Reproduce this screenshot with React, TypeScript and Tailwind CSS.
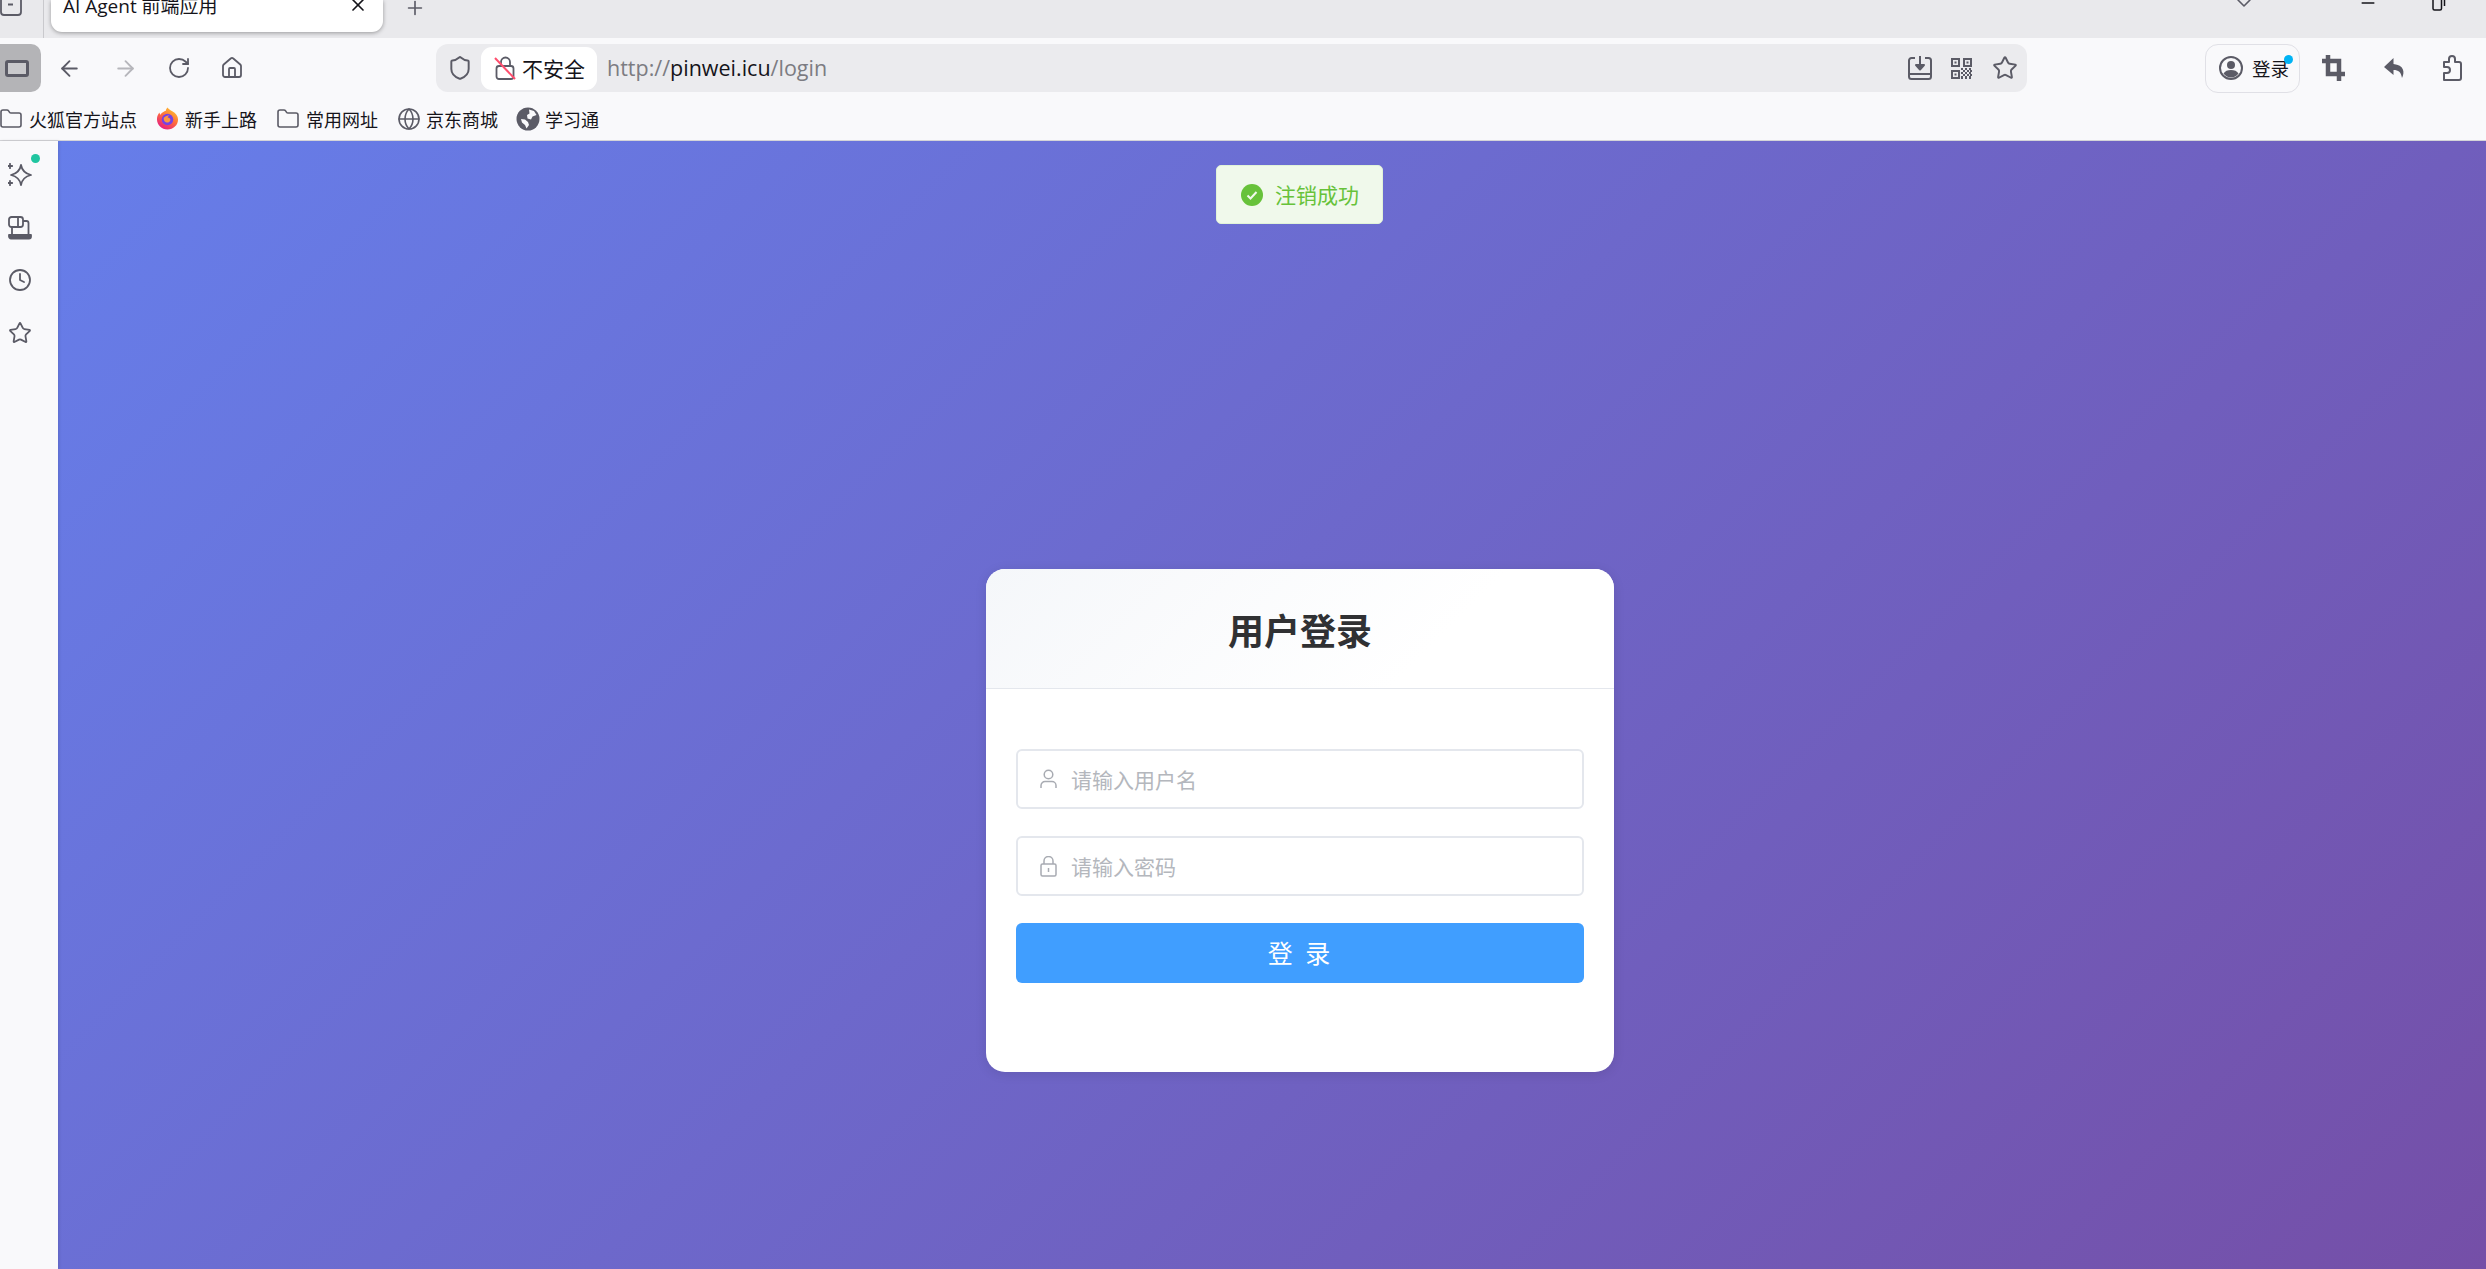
import { ArrowLeft, ArrowRight, RotateCw, House, Shield, Star, Clock, Folder, Globe, X, Plus, ChevronDown, Minus } from "lucide-react";

const cjk = "font-['Noto_Sans_CJK_SC','Liberation_Sans',sans-serif]";
const ui = "font-['Open_Sans','Noto_Sans_CJK_SC',sans-serif]";

const FirefoxLogo = () => (
  <svg width="23" height="24" viewBox="0 0 24 24">
    <defs>
      <linearGradient id="ff" x1="0.8" y1="0" x2="0.2" y2="1">
        <stop offset="0" stopColor="#ffcb2e" />
        <stop offset="0.45" stopColor="#ff7139" />
        <stop offset="1" stopColor="#e31587" />
      </linearGradient>
    </defs>
    <path d="M12 23C5.9 23 1 18.3 1 12.3 1 9 2.4 6.6 3.6 5.3c.1 1 .6 1.900 1.200 2.300C5.500 5.200 8.600 3.800 10.500 3c-.2-.9.400-2.100 1.800-3 .3 1.500 2 2.300 4.700 3.800 3.500 1.900 6 4.700 6 8.700C23 18.300 18.100 23 12 23z" fill="url(#ff)" />
    <circle cx="12" cy="12.500" r="6" fill="#7542e5" />
    <path d="M8 11c1.500-2 4-3 6-2.500-1.200.3-1.800 1-1.800 1.800 0 .6 2.800.5 2.800 2.400 0 2-2 3.300-4 3-1.600-.2-3-1.700-3-4.700z" fill="#ff9640" />
  </svg>
);

const FilledGlobe = () => (
  <svg width="24" height="24" viewBox="0 0 24 24">
    <circle cx="12" cy="12" r="11.500" fill="#5b5b66" />
    <path d="M13 2.500l5 1.500 2.500 4-4 1.500-1.500 3-3.500-1-.5-3.500 2.500-1.500zM5 12l4 .5 3 2.500 1 3-2.500 3.500-1.500-3.500-3-2.500z" fill="#f9f9fb" />
  </svg>
);

const Bookmark = ({ icon, label, width }: { icon: React.ReactNode; label: string; width: string }) => (
  <div className={`flex items-center ${width}`}>
    <span className="flex w-[29px] shrink-0 items-center">{icon}</span>
    <span className="whitespace-nowrap text-[18px] leading-none text-[#15141a]">{label}</span>
  </div>
);

const Sidebar = () => (
  <aside className="relative z-10 flex w-[58px] shrink-0 flex-col items-start bg-[#f9f9fb] pl-[8px] pt-[22px] shadow-[1px_0_3px_rgba(0,0,0,0.12)]">
    <div className="relative h-[24px] w-[24px]">
      <svg width="24" height="24" viewBox="0 0 24 24" fill="none" stroke="#5b5b66" strokeWidth="1.800" strokeLinejoin="round" strokeLinecap="round">
        <path d="M13 2c1 6 4 8.500 10 10-6 1.500-9 4-10 10-1-6-4-8.500-10-10 6-1.500 9-4 10-10z" />
        <path d="M2 .8v4.400M-.2 3h4.400M2 17.800v4.400M-.2 20h4.400" />
      </svg>
      <span className="absolute left-[23px] top-[-9px] h-[9px] w-[9px] rounded-full bg-[#20c5a0]" />
    </div>
    <svg className="mt-[29px]" width="24" height="24" viewBox="0 0 24 24" fill="none" stroke="#5b5b66" strokeWidth="1.800" strokeLinejoin="round">
      <rect x="1" y="1" width="14" height="10" rx="2.500" />
      <path d="M10 1v10" />
      <path d="M4 11v7M15 5h3.500a2 2 0 0 1 2 2v11" />
      <path d="M1 19h22v1.500a2 2 0 0 1-2 2H3a2 2 0 0 1-2-2z" fill="#5b5b66" />
    </svg>
    <Clock className="mt-[28px]" size={24} color="#5b5b66" strokeWidth={1.800} />
    <Star className="mt-[29px]" size={24} color="#5b5b66" strokeWidth={1.800} />
  </aside>
);

const TabStrip = () => (
  <div className="relative flex h-[38px] items-start overflow-hidden bg-[#e9e9ec]">
    <div className="flex h-[38px] w-[44px] shrink-0 items-start justify-center border-r border-[#c9c9cd]">
      <svg className="ml-[-21px]" width="24" height="16" viewBox="0 0 24 16" fill="none" stroke="#5b5b66" strokeWidth="1.800">
        <path d="M2 -4v16a3 3 0 0 0 3 3h14a3 3 0 0 0 3-3V-4" />
        <path d="M9 4.500h5" strokeWidth="2" />
      </svg>
    </div>
    <div className={`ml-[7px] flex h-[32px] w-[332px] shrink-0 items-start justify-between rounded-b-[11px] bg-white pl-[12px] pr-[15px] shadow-[0_1px_4px_rgba(0,0,0,0.35)] ${ui}`}>
      <span className="whitespace-nowrap text-[19px] leading-[12px] text-[#15141a]">AI Agent 前端应用</span>
      <X className="mt-[-5px]" size={20} color="#15141a" strokeWidth={2} />
    </div>
    <Plus className="ml-[21px] mt-[-3px]" size={22} color="#5b5b66" strokeWidth={1.800} />
    <div className="ml-auto flex items-start">
      <ChevronDown className="mr-[102px] mt-[-9px]" size={24} color="#5b5b66" strokeWidth={1.600} />
      <Minus className="mr-[52px] mt-[-7px]" size={20} color="#15141a" strokeWidth={1.800} />
      <svg className="mr-[38px]" width="18" height="11" viewBox="0 0 18 11" fill="none" stroke="#15141a" strokeWidth="1.500">
        <path d="M3 -2v10.500a1.500 1.500 0 0 0 1.500 1.500H10a1.500 1.500 0 0 0 1.500-1.500V-2" />
        <path d="M14.500 -2v8" />
      </svg>
    </div>
  </div>
);

const Toolbar = () => (
  <div className={`my-[6px] flex h-[48px] items-center ${ui}`}>
    <div className="flex h-[48px] w-[41px] shrink-0 items-center justify-start rounded-r-[10px] bg-[#b4b4b7] pl-[5px]">
      <div className="h-[17px] w-[24px] rounded-[3px] border-[3px] border-[#5b5b66] bg-[#c9c9cc]" />
    </div>
    <div className="flex w-[57px] shrink-0 justify-center"><ArrowLeft size={25} color="#5b5b66" strokeWidth={1.800} /></div>
    <div className="flex w-[54px] shrink-0 justify-center"><ArrowRight size={25} color="#b6b6bb" strokeWidth={1.800} /></div>
    <div className="flex w-[54px] shrink-0 justify-center"><RotateCw size={24} color="#5b5b66" strokeWidth={1.800} /></div>
    <div className="flex w-[52px] shrink-0 justify-center"><House size={24} color="#5b5b66" strokeWidth={1.800} /></div>
    <div className="ml-[178px] flex h-[48px] w-[1591px] shrink-0 items-center rounded-[12px] bg-[#ebebee] pl-[11px] pr-[9px]">
      <Shield size={26} color="#5b5b66" strokeWidth={1.800} />
      <div className="ml-[8px] flex h-[43px] w-[116px] shrink-0 items-center rounded-[11px] bg-white pl-[13px]">
        <svg width="22" height="26" viewBox="0 0 22 26" fill="none">
          <path d="M7 11V7a4.500 4.500 0 0 1 9 0v4" stroke="#5b5b66" strokeWidth="1.800" />
          <rect x="2.500" y="11" width="17" height="13" rx="2.500" stroke="#5b5b66" strokeWidth="1.800" />
          <path d="M1 3l20 21" stroke="#ff4f6e" strokeWidth="2" />
        </svg>
        <span className={`ml-[6px] whitespace-nowrap text-[21px] leading-none text-[#15141a] ${cjk}`}>不安全</span>
      </div>
      <span className="ml-[10px] whitespace-nowrap text-[21.500px] leading-none text-[#7c7c82]">
        http://<span className="text-[#15141a]">pinwei.icu</span>/login
      </span>
      <div className="ml-auto flex items-center">
        <svg width="26" height="26" viewBox="0 0 26 26" fill="none" stroke="#5b5b66" strokeWidth="2" strokeLinejoin="round">
          <path d="M8 3H4.500A2.500 2.500 0 0 0 2 5.500v16A2.500 2.500 0 0 0 4.500 24h17a2.500 2.500 0 0 0 2.500-2.500v-16A2.500 2.500 0 0 0 21.500 3H18" />
          <path d="M2 19h22" />
          <path d="M13 1v11" />
          <path d="M9 10h8l-4 4.500z" fill="#5b5b66" />
        </svg>
        <svg className="ml-[18px]" width="21" height="21" viewBox="0 0 21 21" fill="#5b5b66">
          <path fillRule="evenodd" d="M0 0h9v9H0zM2 2v5h5V2zM12 0h9v9h-9zM14 2v5h5V2zM0 12h9v9H0zM2 14v5h5v-5z" />
          <rect x="3.500" y="3.500" width="2" height="2" />
          <rect x="15.500" y="3.500" width="2" height="2" />
          <rect x="3.500" y="15.500" width="2" height="2" />
          <path d="M10 10h2v2h-2zM14 10h2v2h-2zM18 10h2v2h-2zM12 12h2v2h-2zM16 12h2v2h-2zM19 12h2v2h-2zM10 14h2v2h-2zM14 14h2v2h-2zM18 14h2v2h-2zM12 16h2v2h-2zM16 16h2v2h-2zM19 16h2v2h-2zM10 18h2v3h-2zM14 18h2v3h-2zM18 18h2v3h-2z" />
        </svg>
        <Star className="ml-[20px]" size={26} color="#5b5b66" strokeWidth={1.800} />
      </div>
    </div>
    <div className={`relative ml-[178px] flex h-[49px] w-[95px] shrink-0 items-center rounded-[13px] border border-[#e0e0e6] pl-[13px] ${cjk}`}>
      <svg width="24" height="26" viewBox="0 0 24 26" fill="none">
        <circle cx="12" cy="13" r="11" stroke="#5b5b66" strokeWidth="2" />
        <circle cx="12" cy="10" r="4" fill="#5b5b66" />
        <path d="M4.500 18.500c1.500-2.500 4-3.500 7.500-3.500s6 1 7.500 3.500c-2 2.500-4.500 4-7.500 4s-5.500-1.500-7.500-4z" fill="#5b5b66" />
      </svg>
      <span className="ml-[9px] text-[18.500px] leading-none text-[#15141a]">登录</span>
      <span className="absolute left-[78px] top-[10px] h-[9px] w-[9px] rounded-full bg-[#00b3f4]" />
    </div>
    <div className="ml-[22px] flex w-[24px] shrink-0 justify-center">
      <svg width="24" height="26" viewBox="0 0 24 26" fill="none" stroke="#5b5b66" strokeWidth="4.500">
        <path d="M6 0v19h17" />
        <path d="M0 6h17v20" />
      </svg>
    </div>
    <div className="ml-[37px] flex w-[24px] shrink-0 justify-center">
      <svg width="24" height="24" viewBox="0 0 24 24" fill="#5b5b66">
        <path d="M10.500 2L1 11l9.500 8v-5c5 0 7.500 2 8.500 8 3-6 2-13-8.500-14z" />
      </svg>
    </div>
    <div className="ml-[33px] flex w-[24px] shrink-0 justify-center">
      <svg width="22" height="26" viewBox="0 0 22 26" fill="none" stroke="#5b5b66" strokeWidth="2" strokeLinejoin="round">
        <path d="M3 7h5V4a3 3 0 0 1 6 0v3h4a2 2 0 0 1 2 2v14a2 2 0 0 1-2 2H3v-7h3a2.500 2.500 0 0 0 0-6H3z" />
      </svg>
    </div>
  </div>
);

const Bookmarks = () => (
  <div className={`flex h-[42px] items-center ${cjk}`}>
    <Bookmark width="w-[156px]" icon={<Folder className="ml-[-1px]" size={24} color="#5b5b66" strokeWidth={1.600} />} label="火狐官方站点" />
    <Bookmark width="w-[121px]" icon={<FirefoxLogo />} label="新手上路" />
    <Bookmark width="w-[120px]" icon={<Folder className="ml-[-1px]" size={24} color="#5b5b66" strokeWidth={1.600} />} label="常用网址" />
    <Bookmark width="w-[119px]" icon={<Globe size={24} color="#5b5b66" strokeWidth={1.600} />} label="京东商城" />
    <Bookmark width="w-[90px]" icon={<FilledGlobe />} label="学习通" />
  </div>
);

const LoginCard = () => (
  <div className={`h-[503px] w-[628px] overflow-hidden rounded-[19px] bg-white shadow-[0_2px_12px_rgba(0,0,0,0.1)] ${cjk}`}>
    <div className="flex h-[120px] items-center justify-center border-b border-[#e4e7ed] bg-[linear-gradient(135deg,#f5f7fa_0%,#ffffff_70%)]">
      <h2 className="text-[36px] font-bold leading-none text-[#303133]">用户登录</h2>
    </div>
    <form className="flex flex-col px-[30px] pt-[60px]">
      <div className="flex h-[60px] items-center rounded-[6px] border-2 border-[#e4e7ed] pl-[22px]">
        <svg width="17" height="20" viewBox="0 0 17 20" fill="none" stroke="#a8abb2" strokeWidth="1.500">
          <circle cx="8.500" cy="5.500" r="4.300" />
          <path d="M1 19v-2.500a4 4 0 0 1 4-4h7a4 4 0 0 1 4 4V19" />
        </svg>
        <input placeholder="请输入用户名" className="ml-[14px] h-full flex-1 bg-transparent text-[21px] outline-none placeholder:text-[#b4b7bd]" />
      </div>
      <div className="mt-[27px] flex h-[60px] items-center rounded-[6px] border-2 border-[#e4e7ed] pl-[22px]">
        <svg width="17" height="21" viewBox="0 0 17 21" fill="none" stroke="#a8abb2" strokeWidth="1.500">
          <path d="M4 8V5a4.500 4.500 0 0 1 9 0v3" />
          <rect x="1" y="8" width="15" height="12" rx="1.500" />
          <path d="M8.500 12v4" />
        </svg>
        <input placeholder="请输入密码" className="ml-[14px] h-full flex-1 bg-transparent text-[21px] outline-none placeholder:text-[#b4b7bd]" />
      </div>
      <button type="button" className="mt-[27px] h-[60px] rounded-[6px] bg-[#409eff] pr-[2px] text-[25px] text-white [word-spacing:7px]">登 录</button>
    </form>
  </div>
);

export default function App() {
  return (
    <div className="flex h-screen w-full flex-col overflow-hidden bg-[#f9f9fb]">
      <TabStrip />
      <Toolbar />
      <Bookmarks />
      <div className="flex min-h-0 flex-1 border-t border-[#d4d4d8]">
        <Sidebar />
        <main className="relative flex flex-1 justify-center bg-[linear-gradient(135deg,#667eea_0%,#764ba2_100%)] bg-[length:2484px_1360px] bg-no-repeat pl-[56px] pt-[428px]">
          <div className="absolute inset-x-0 top-[24px] flex justify-center pl-[55px]">
            <div className={`flex h-[59px] w-[167px] items-center rounded-[5px] border border-[#e1f3d8] bg-[#f0f9eb] pl-[24px] ${cjk}`}>
              <svg width="22" height="22" viewBox="0 0 22 22">
                <circle cx="11" cy="11" r="11" fill="#67c23a" />
                <path d="M6.500 11.500l3 3 6-6.500" fill="none" stroke="#f0f9eb" strokeWidth="2" />
              </svg>
              <span className="ml-[12px] whitespace-nowrap text-[21px] leading-none text-[#67c23a]">注销成功</span>
            </div>
          </div>
          <LoginCard />
        </main>
      </div>
    </div>
  );
}
